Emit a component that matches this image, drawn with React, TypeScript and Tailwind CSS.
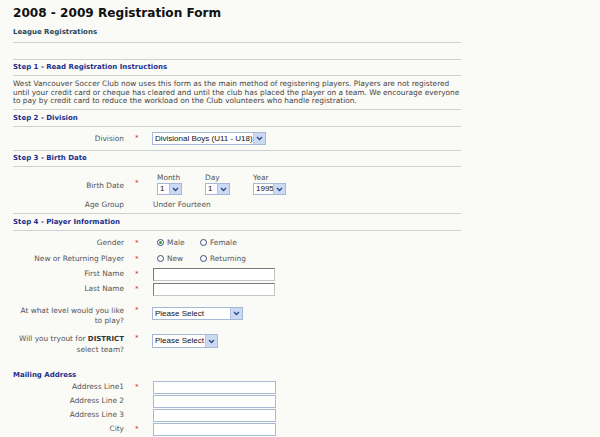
import React from 'react'

const font = "font-['DejaVu_Sans',Verdana,sans-serif]"

function Chevron() {
  return (
    <div className="flex h-full w-[12px] items-center justify-center border-l border-[#b3c4e3] bg-[#cbd9f2]">
      <svg width="7" height="5" viewBox="0 0 7 5">
        <path d="M1 1 L3.5 3.5 L6 1" fill="none" stroke="#2b4a8e" strokeWidth="1.4" />
      </svg>
    </div>
  )
}

function Select({ className, text }: { className: string; text: string }) {
  return (
    <div className={`flex items-stretch border border-[#a6b8d6] bg-white ${className}`}>
      <div className="flex flex-1 items-center overflow-hidden whitespace-nowrap pl-[2px] font-['Liberation_Sans',Arial,sans-serif] text-[8px] text-[#111]">
        {text}
      </div>
      <Chevron />
    </div>
  )
}

function Star() {
  return <div className="w-[28px] shrink-0 pl-[11px] text-[7px] leading-[9px] text-[#e02424]">*</div>
}

function Radio({ checked, label, className }: { checked?: boolean; label: string; className: string }) {
  return (
    <div className={`flex items-center ${className}`}>
      <div className="flex h-[7px] w-[7px] items-center justify-center rounded-full border border-[#36507e] bg-white">
        {checked && <div className="h-[3px] w-[3px] rounded-full bg-[#2fa52f]" />}
      </div>
      <span className="ml-[3px]">{label}</span>
    </div>
  )
}

function Label({ children, className = '' }: { children: React.ReactNode; className?: string }) {
  return <div className={`w-[111px] shrink-0 whitespace-nowrap text-right ${className}`}>{children}</div>
}

function Heading({ children, className = '' }: { children: React.ReactNode; className?: string }) {
  return (
    <div className={`border-b border-[#cfd0d5] ${className}`}>
      <div className="text-[7px] font-bold leading-[9px] text-[#1d2f8a]">{children}</div>
    </div>
  )
}

export default function App() {
  return (
    <div className={`min-h-screen bg-[#fafaf7] ${font} text-[7.4px] text-[#555]`}>
      <div className="ml-[13px] w-[448px] pt-[6px]">
        <h1 className="h-[15px] text-[12.1px] font-bold leading-[15px] text-[#111]">2008 - 2009 Registration Form</h1>

        <div className="h-[22px] border-b border-[#cfd0d5] pt-[7px]">
          <div className="text-[7px] font-bold leading-[9px] text-[#2c4858]">League Registrations</div>
        </div>
        <div className="h-[17px] border-b border-[#cfd0d5]" />

        <Heading className="h-[16px] pt-[3px]">Step 1 - Read Registration Instructions</Heading>

        <div className="h-[34px] whitespace-nowrap border-b border-[#cfd0d5] pt-[4px] leading-[8.5px] text-[#444]">
          West Vancouver Soccer Club now uses this form as the main method of registering players. Players are not registered<br />
          until your credit card or cheque has cleared and until the club has placed the player on a team. We encourage everyone<br />
          to pay by credit card to reduce the workload on the Club volunteers who handle registration.
        </div>

        <Heading className="h-[17px] pt-[4px]">Step 2 - Division</Heading>

        <div className="flex h-[24px] items-start border-b border-[#cfd0d5] pt-[5px]">
          <Label className="pt-[2px] leading-[9px]">Division</Label>
          <div className="pt-[2px]"><Star /></div>
          <Select className="h-[13px] w-[114px]" text="Divisional Boys (U11 - U18)" />
        </div>

        <Heading className="h-[16px] pt-[3px]">Step 3 - Birth Date</Heading>

        <div className="h-[47px] border-b border-[#cfd0d5] pt-[6px]">
          <div className="flex items-start">
            <Label className="pt-[8px] leading-[9px]">Birth Date</Label>
            <div className="pt-[6px]"><Star /></div>
            <div className="flex gap-[23px] pl-[5px]">
              <div>
                <div className="leading-[9px]">Month</div>
                <Select className="mt-[1px] h-[12px] w-[25px]" text="1" />
              </div>
              <div>
                <div className="leading-[9px]">Day</div>
                <Select className="mt-[1px] h-[12px] w-[25px]" text="1" />
              </div>
              <div>
                <div className="leading-[9px]">Year</div>
                <Select className="mt-[1px] h-[12px] w-[33px]" text="1995" />
              </div>
            </div>
          </div>
          <div className="mt-[5px] flex leading-[10px]">
            <Label>Age Group</Label>
            <div className="w-[29px]" />
            <div>Under Fourteen</div>
          </div>
        </div>

        <Heading className="h-[17px] pt-[4px]">Step 4 - Player Information</Heading>

        <div className="pt-[4px]">
          <div className="flex h-[16px] items-center">
            <Label>Gender</Label>
            <Star />
            <Radio checked label="Male" className="w-[48px] pl-[5px]" />
            <Radio label="Female" className="" />
          </div>
          <div className="flex h-[16px] items-center">
            <Label>New or Returning Player</Label>
            <Star />
            <Radio label="New" className="w-[48px] pl-[5px]" />
            <Radio label="Returning" className="" />
          </div>
          <div className="flex h-[14px] items-center">
            <Label>First Name</Label>
            <Star />
            <div className="ml-[1px] h-[13px] w-[122px] border border-[#c5c5c5] border-l-[#7a7a7a] border-t-[#7a7a7a] bg-white" />
          </div>
          <div className="mt-[1px] flex h-[14px] items-center">
            <Label>Last Name</Label>
            <Star />
            <div className="ml-[1px] h-[13px] w-[122px] border border-[#c5c5c5] border-l-[#7a7a7a] border-t-[#7a7a7a] bg-white" />
          </div>

          <div className="mt-[10px] flex h-[28px] items-start">
            <Label className="leading-[10px]">At what level would you like<br />to play?</Label>
            <Star />
            <Select className="mt-[1px] h-[13px] w-[91px]" text="Please Select" />
          </div>

          <div className="flex h-[37px] items-start">
            <Label className="leading-[9.5px]">Will you tryout for <b className="text-[7px] text-[#333]">DISTRICT</b><br />select team?</Label>
            <Star />
            <Select className="h-[14px] w-[66px]" text="Please Select" />
          </div>

          <div className="h-[9px] text-[7px] font-bold leading-[9px] text-[#1d2f8a]">Mailing Address</div>

          <div>
            {[
              ['Address Line1', true],
              ['Address Line 2', false],
              ['Address Line 3', false],
              ['City', true],
            ].map(([label, req]) => (
              <div key={label as string} className="flex h-[14px] items-center">
                <Label>{label}</Label>
                {req ? <Star /> : <div className="w-[28px] shrink-0" />}
                <div className="ml-[1px] h-[13px] w-[123px] border border-[#a9b9d3] bg-white" />
              </div>
            ))}
          </div>
        </div>
      </div>
    </div>
  )
}
